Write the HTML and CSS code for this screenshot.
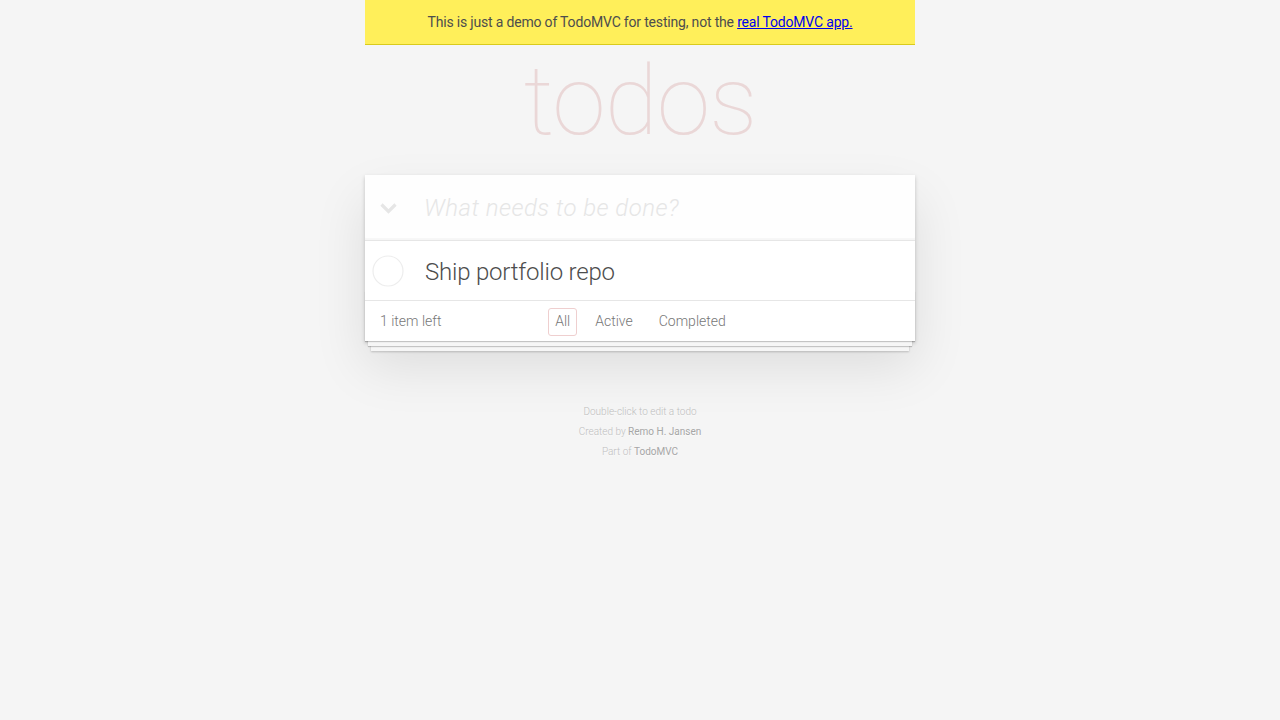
FILE: index.html
```html
<!DOCTYPE html>
<html lang="en">
<head>
<meta charset="utf-8">
<title>TodoMVC</title>
<link rel="stylesheet" href="styles.css">
</head>
<body>
<div class="page">
  <div class="banner">This is just a demo of TodoMVC for testing, not the <a href="#">real TodoMVC app.</a></div>
  <header class="header">
    <h1 class="title">todos</h1>
  </header>
  <section class="todoapp">
    <div class="new-row">
      <span class="toggle-all">
        <svg width="17" height="11" viewBox="0 0 17 11"><polyline points="1.5,1.5 8.5,8.5 15.5,1.5" fill="none" stroke="#e6e6e6" stroke-width="3.2"/></svg>
      </span>
      <input class="new-todo" placeholder="What needs to be done?">
    </div>
    <ul class="todo-list">
      <li class="todo">
        <span class="toggle"><svg width="32" height="32" viewBox="0 0 32 32"><circle cx="16" cy="16" r="15" fill="none" stroke="#ededed" stroke-width="1.2"/></svg></span>
        <label class="todo-label">Ship portfolio repo</label>
      </li>
    </ul>
    <footer class="footer">
      <span class="todo-count">1 item left</span>
      <ul class="filters">
        <li><a class="selected" href="#">All</a></li>
        <li><a href="#">Active</a></li>
        <li><a href="#">Completed</a></li>
      </ul>
    </footer>
  </section>
  <footer class="info">
    <p>Double-click to edit a todo</p>
    <p>Created by <a href="#">Remo H. Jansen</a></p>
    <p>Part of <a href="#">TodoMVC</a></p>
  </footer>
</div>
</body>
</html>
```

FILE: styles.css
```css
html, body {
  margin: 0;
  padding: 0;
}
body {
  background: #f5f5f5;
  font-family: Roboto, "Liberation Sans", Arial, sans-serif;
  font-size: 14px;
  line-height: 1.4em;
  font-weight: 300;
  color: #4d4d4d;
}
.page {
  width: 550px;
  margin: 0 auto;
}
.banner {
  height: 44px;
  line-height: 44px;
  background: #ffef5a;
  border-bottom: 1px solid #d9cb1c;
  text-align: center;
  font-size: 14px;
  font-weight: 400;
  letter-spacing: -0.18px;
  color: #4d4d4d;
}
.banner a {
  color: #0000ee;
  text-decoration: underline;
}
.header {
  height: 130px;
  box-sizing: border-box;
  padding-top: 8px;
}
.title {
  margin: 0;
  font-size: 97px;
  line-height: 97px;
  font-weight: 100;
  text-align: center;
  color: #ead7d7;
  letter-spacing: -1px;
}
.todoapp {
  position: relative;
  background: #fff;
  box-shadow: 0 2px 4px rgba(0,0,0,0.2), 0 25px 50px rgba(0,0,0,0.1);
}
.new-row {
  position: relative;
  height: 65px;
  background: rgba(0,0,0,0.003);
  box-shadow: inset 0 -2px 1px rgba(0,0,0,0.03);
  display: flex;
  align-items: center;
}
.toggle-all {
  position: absolute;
  left: 15px;
  top: 28px;
  display: flex;
}
.new-todo {
  width: 100%;
  height: 65px;
  box-sizing: border-box;
  padding: 16px 16px 16px 59px;
  border: none;
  background: transparent;
  outline: none;
  font-family: inherit;
  font-size: 24px;
  font-weight: 300;
  letter-spacing: 0.45px;
  color: #4d4d4d;
}
.new-todo::placeholder {
  font-style: italic;
  font-weight: 300;
  color: #e6e6e6;
}
.todo-list {
  margin: 0;
  padding: 0;
  list-style: none;
  border-top: 1px solid #e6e6e6;
}
.todo {
  position: relative;
  display: flex;
  align-items: center;
  height: 59px;
}
.toggle {
  position: absolute;
  left: 7px;
  top: 14px;
  display: flex;
}
.todo-label {
  padding: 4px 15px 0 60px;
  font-size: 24px;
  line-height: 1.2;
  letter-spacing: -0.2px;
  color: #4d4d4d;
  font-weight: 300;
}
.footer {
  position: relative;
  height: 20px;
  padding: 11px 15px 9px;
  border-top: 1px solid #e6e6e6;
  color: #777;
  text-align: center;
}
.footer::before {
  content: "";
  position: absolute;
  right: 0;
  bottom: 0;
  left: 0;
  height: 50px;
  overflow: hidden;
  box-shadow: 0 1px 1px rgba(0,0,0,0.2),
    0 8px 0 -3px #f6f6f6,
    0 9px 1px -3px rgba(0,0,0,0.2),
    0 16px 0 -6px #f6f6f6,
    0 17px 2px -6px rgba(0,0,0,0.2);
}
.todo-count {
  position: relative;
  float: left;
  text-align: left;
}
.filters {
  margin: 0;
  padding: 0 0 0 2px;
  list-style: none;
  position: absolute;
  left: 0;
  right: 0;
  top: 11px;
  display: flex;
  justify-content: center;
}
.filters li a {
  display: block;
  margin: -4px 5px 0;
  padding: 3px 7px;
  border: 1px solid transparent;
  border-radius: 3px;
  color: inherit;
  text-decoration: none;
}
.filters li:first-child a {
  padding: 3px 6px;
}
.filters li a.selected {
  border-color: #efcfcf;
}
.info {
  margin-top: 66px;
  color: #bfbfbf;
  font-size: 10px;
  text-shadow: 0 1px 0 rgba(255,255,255,0.5);
  text-align: center;
}
.info p {
  margin: 0 0 10px;
  line-height: 1;
}
.info a {
  color: #a6a6a6;
  font-weight: 400;
  text-decoration: none;
}
```
